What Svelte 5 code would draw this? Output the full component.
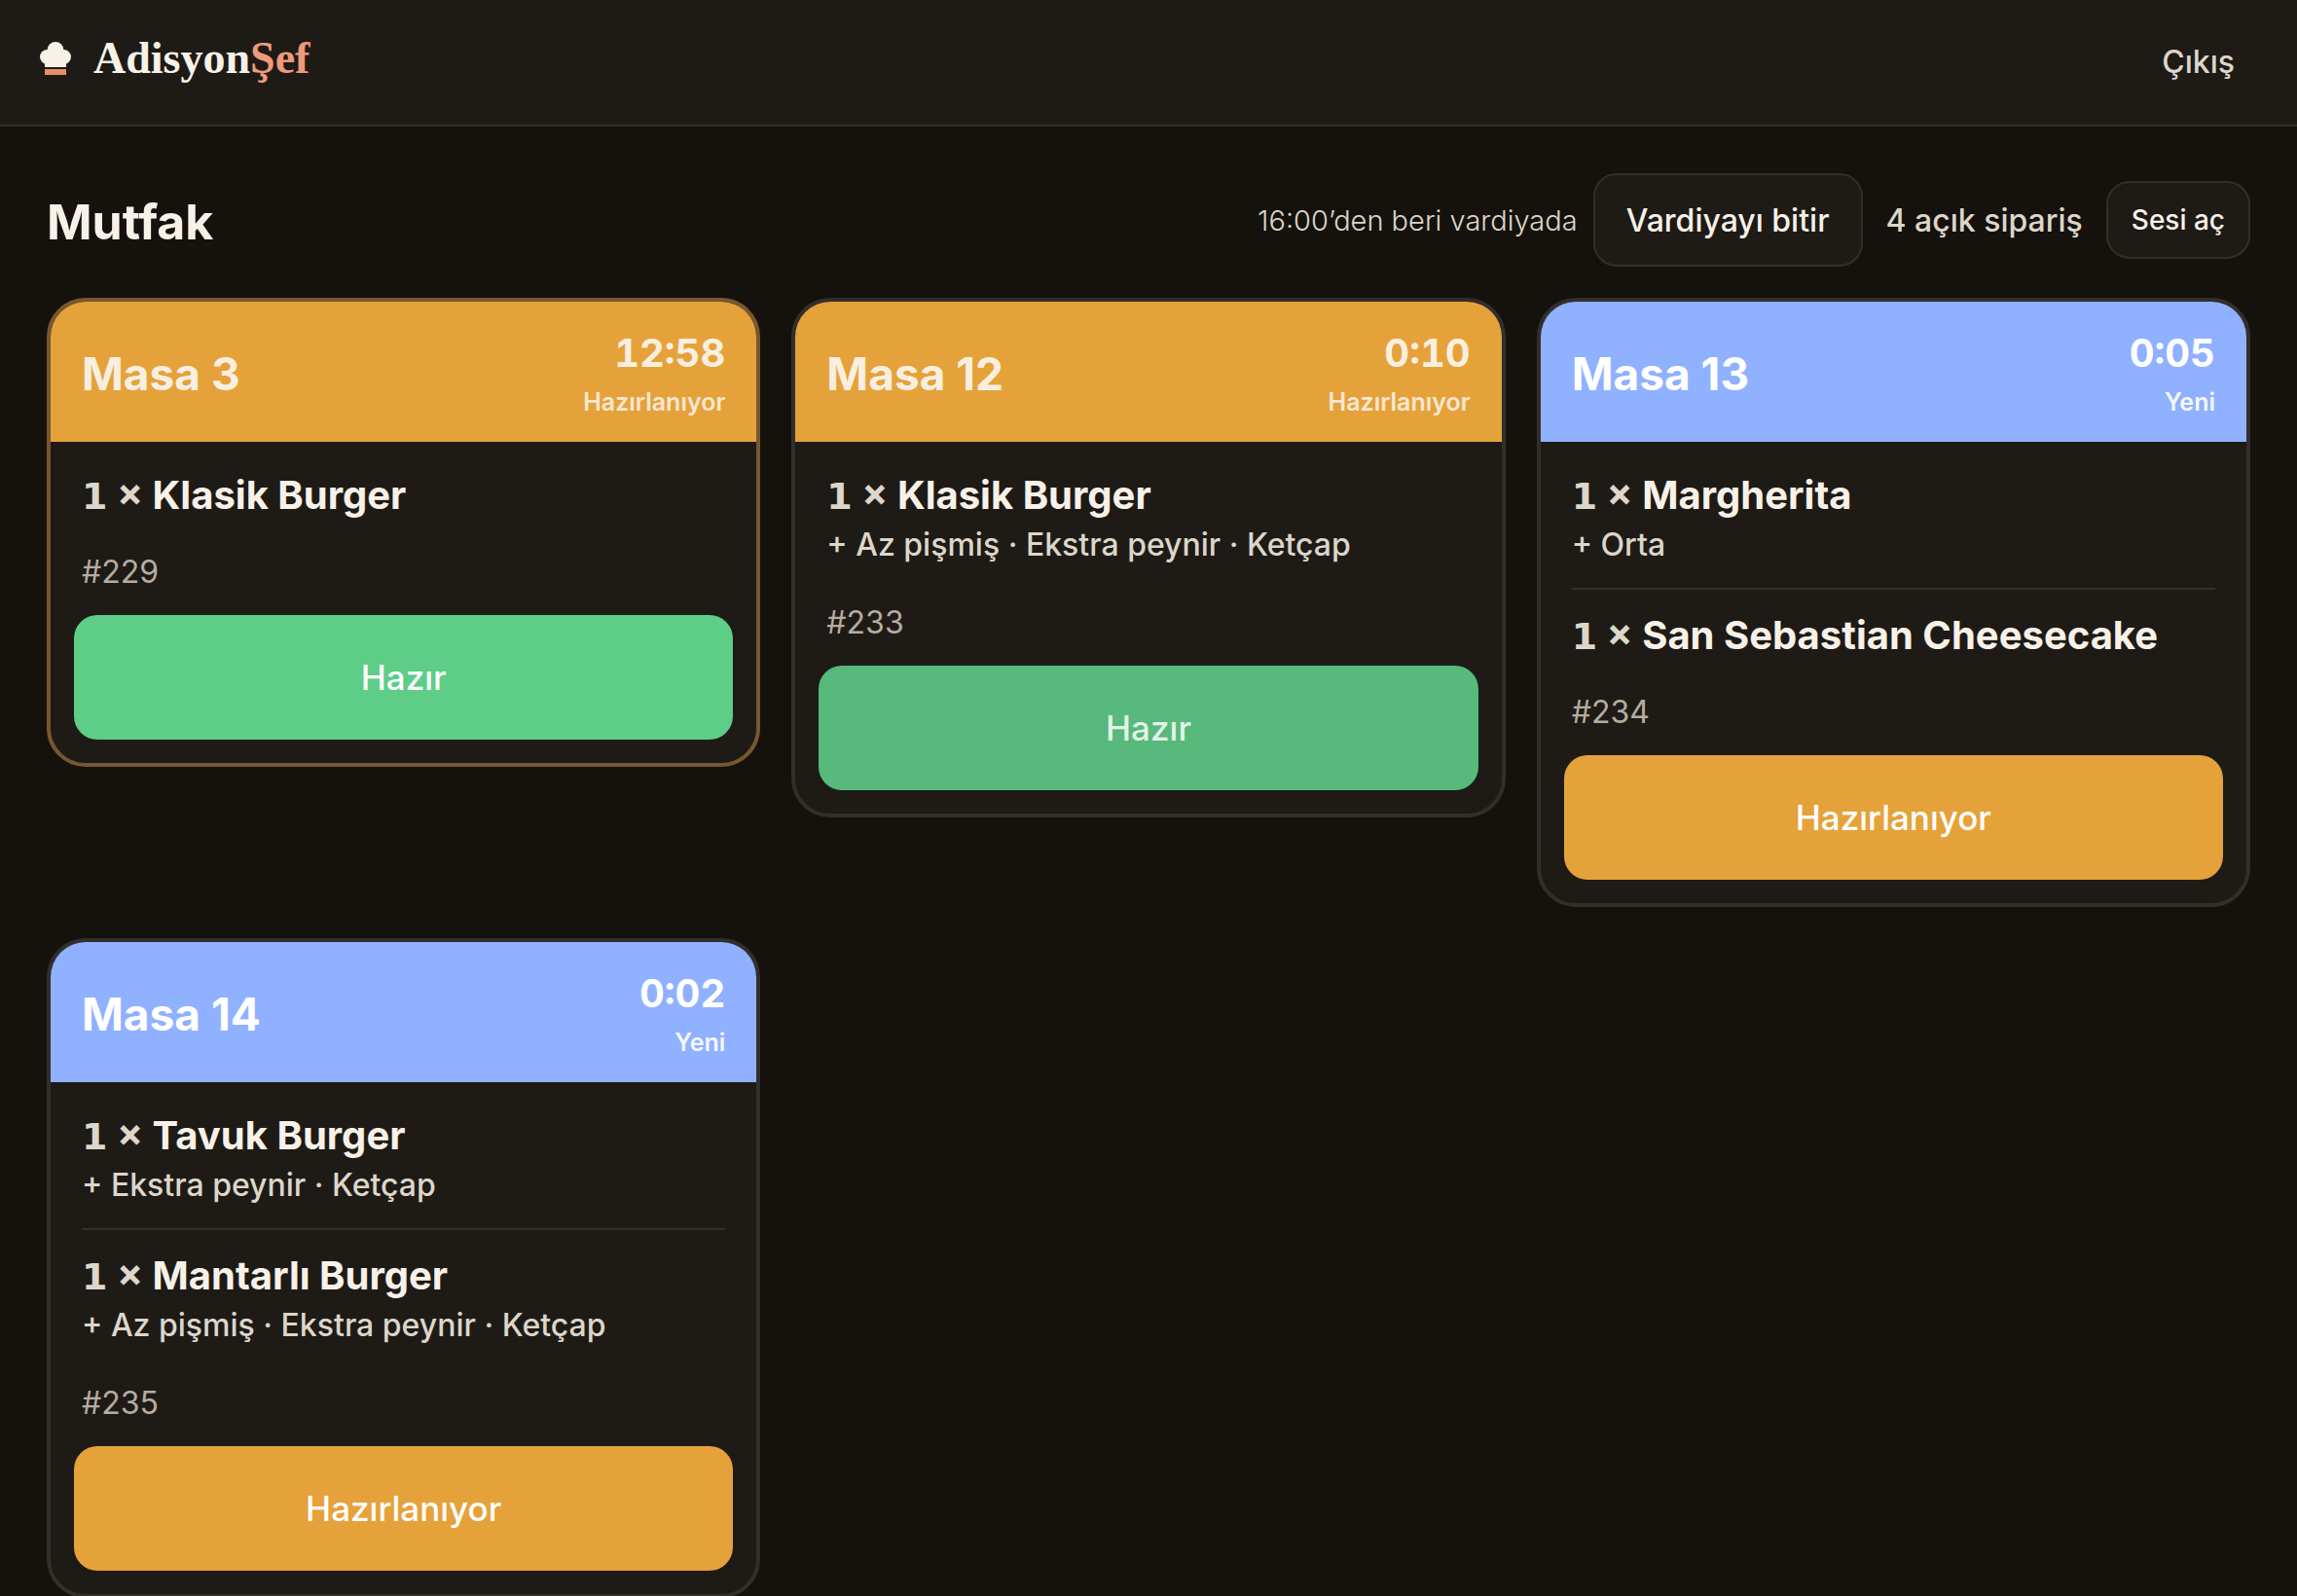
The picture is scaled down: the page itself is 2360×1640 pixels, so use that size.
<script lang="ts">
  type Status = "new" | "preparing";

  interface Item {
    qty: number;
    name: string;
    options?: string[];
  }

  interface Order {
    id: number;
    table: string;
    elapsed: string;
    status: Status;
    late?: boolean;
    busy?: boolean;
    items: Item[];
  }

  const statusLabels: Record<Status, string> = {
    new: "Yeni",
    preparing: "Hazırlanıyor",
  };

  const actionLabels: Record<Status, string> = {
    new: "Hazırlanıyor",
    preparing: "Hazır",
  };

  let orders: Order[] = $state([
    {
      id: 229,
      table: "Masa 3",
      elapsed: "12:58",
      status: "preparing",
      late: true,
      items: [{ qty: 1, name: "Klasik Burger" }],
    },
    {
      id: 233,
      table: "Masa 12",
      elapsed: "0:10",
      status: "preparing",
      busy: true,
      items: [
        {
          qty: 1,
          name: "Klasik Burger",
          options: ["Az pişmiş", "Ekstra peynir", "Ketçap"],
        },
      ],
    },
    {
      id: 234,
      table: "Masa 13",
      elapsed: "0:05",
      status: "new",
      items: [
        { qty: 1, name: "Margherita", options: ["Orta"] },
        { qty: 1, name: "San Sebastian Cheesecake" },
      ],
    },
    {
      id: 235,
      table: "Masa 14",
      elapsed: "0:02",
      status: "new",
      items: [
        { qty: 1, name: "Tavuk Burger", options: ["Ekstra peynir", "Ketçap"] },
        {
          qty: 1,
          name: "Mantarlı Burger",
          options: ["Az pişmiş", "Ekstra peynir", "Ketçap"],
        },
      ],
    },
  ]);

  function advance(order: Order) {
    if (order.status === "new") {
      order.status = "preparing";
    } else {
      orders = orders.filter((o) => o.id !== order.id);
    }
  }
</script>

<header class="topbar">
  <a class="brand" href="/">
    <svg class="logo" viewBox="-1 0 34 34" aria-hidden="true">
      <g class="hat">
        <circle cx="16" cy="8.5" r="8.5" />
        <circle cx="7.5" cy="15.5" r="7.5" />
        <circle cx="24.5" cy="15.5" r="7.5" />
        <path d="M5 14H27V26H5Z" />
      </g>
      <rect class="band" x="5" y="28" width="22" height="6" />
    </svg>
    <span class="wordmark">Adisyon<span class="accent">Şef</span></span>
  </a>
  <button class="logout">Çıkış</button>
</header>

<main>
  <div class="page-head">
    <h1>Mutfak</h1>
    <div class="tools">
      <div class="shift">
        <span class="since">16:00’den beri vardiyada</span>
        <button class="btn">Vardiyayı bitir</button>
      </div>
      <span class="count">{orders.length} açık sipariş</span>
      <button class="btn small">Sesi aç</button>
    </div>
  </div>

  <div class="board">
    {#each orders as order (order.id)}
      <article class="card" class:late={order.late}>
        <div class="card-head {order.status}">
          <h2>{order.table}</h2>
          <div class="meta">
            <span class="time">{order.elapsed}</span>
            <span class="status">{statusLabels[order.status]}</span>
          </div>
        </div>

        <ul class="items">
          {#each order.items as item}
            <li>
              <div class="name">
                <span class="qty"><b>{item.qty}</b> ×</span>
                {item.name}
              </div>
              {#if item.options}
                <div class="options">+ {item.options.join(" · ")}</div>
              {/if}
            </li>
          {/each}
        </ul>

        <div class="order-no">#{order.id}</div>
        <div class="card-foot">
          <button
            class="action {order.status}"
            class:busy={order.busy}
            onclick={() => advance(order)}
          >
            {actionLabels[order.status]}
          </button>
        </div>
      </article>
    {/each}
  </div>
</main>

<style>
  :global(body) {
    background: #15120d;
    color: #f7f1e8;
    font-family: "Inter", sans-serif;
    font-size: 32px;
  }

  button {
    font-family: inherit;
    cursor: pointer;
  }

  h1,
  h2 {
    margin: 0;
    padding-top: 4px;
    font-size: 50px;
    line-height: 56px;
    font-weight: 700;
  }

  h2 {
    font-size: 46px;
  }

  .topbar {
    display: flex;
    align-items: center;
    justify-content: space-between;
    min-height: 128px;
    padding: 0 32px 0 40px;
    background: #1e1b16;
    border-bottom: 2px solid #322f2b;
  }

  .brand {
    display: flex;
    align-items: center;
    gap: 22px;
    padding-bottom: 8px;
    color: #f7f1e8;
    text-decoration: none;
  }

  .logo {
    width: 34px;
    height: 34px;
  }

  .hat {
    fill: #f7f1e8;
  }

  .band {
    fill: #e88d69;
  }

  .wordmark {
    font-family: "Liberation Serif", serif;
    font-size: 46px;
    line-height: 56px;
    font-weight: 700;
  }

  .accent {
    color: #f0997b;
  }

  .logout {
    padding: 16px 32px;
    border: 0;
    background: none;
    color: #ddd6ca;
    font-size: 32px;
    line-height: 40px;
    font-weight: 500;
  }

  main {
    padding: 48px;
  }

  .page-head {
    display: flex;
    align-items: center;
    justify-content: space-between;
    margin-bottom: 32px;
  }

  .tools {
    display: flex;
    align-items: center;
    gap: 24px;
    color: #ddd6ca;
  }

  .shift {
    display: flex;
    align-items: center;
    gap: 16px;
  }

  .since {
    font-size: 29px;
    font-weight: 300;
  }

  .count {
    font-size: 32px;
    font-weight: 500;
  }

  .btn {
    min-height: 96px;
    padding: 0 32px;
    border: 2px solid #322f2b;
    border-radius: 24px;
    background: #1e1b16;
    color: #f7f1e8;
    font-size: 32px;
    font-weight: 500;
  }

  .btn.small {
    min-height: 80px;
    padding: 0 24px;
    font-size: 28px;
  }

  .board {
    display: grid;
    grid-template-columns: repeat(3, 1fr);
    align-items: start;
    gap: 32px;
  }

  .card {
    overflow: hidden;
    border: 4px solid #322f2b;
    border-radius: 40px;
    background: #1e1b16;
  }

  .card.late {
    border-color: #775730;
  }

  .card-head {
    display: flex;
    align-items: center;
    justify-content: space-between;
    min-height: 144px;
    padding: 0 32px;
    color: #fff;
  }

  .card-head.new {
    background: #8fb1ff;
  }

  .card-head.preparing {
    background: #e6a23a;
    color: #f9efe0;
  }

  .meta {
    display: flex;
    flex-direction: column;
    align-items: flex-end;
    gap: 10px;
    padding-top: 4px;
  }

  .time {
    font-size: 40px;
    line-height: 48px;
    font-weight: 700;
    font-variant-numeric: tabular-nums;
  }

  .status {
    font-size: 25px;
    line-height: 32px;
    font-weight: 600;
    opacity: 0.9;
  }

  .items {
    margin: 0;
    padding: 8px 32px 16px;
    list-style: none;
  }

  .items li {
    padding: 22px 0 18px;
  }

  .items li + li {
    border-top: 2px solid #322f2b;
  }

  .name {
    font-size: 40px;
    line-height: 50px;
    font-weight: 700;
  }

  .qty {
    color: #ddd6ca;
  }

  .qty b {
    font-family: "DejaVu Sans", sans-serif;
    font-size: 38px;
    line-height: 1;
  }

  .options {
    padding: 2px 0;
    color: #ddd6ca;
    font-size: 32px;
    line-height: 48px;
    font-weight: 500;
  }

  .order-no {
    padding: 0 32px;
    color: #b5ada0;
    font-size: 32px;
    line-height: 40px;
  }

  .card-foot {
    padding: 24px;
  }

  .action {
    display: block;
    width: 100%;
    min-height: 128px;
    border: 0;
    border-radius: 24px;
    color: #fff;
    font-size: 35px;
    font-weight: 500;
  }

  .action.new {
    background: #e6a23a;
  }

  .action.preparing {
    background: #5dcd88;
  }

  .action.busy {
    background: #57b97b;
    color: #e3f3e8;
  }
</style>
